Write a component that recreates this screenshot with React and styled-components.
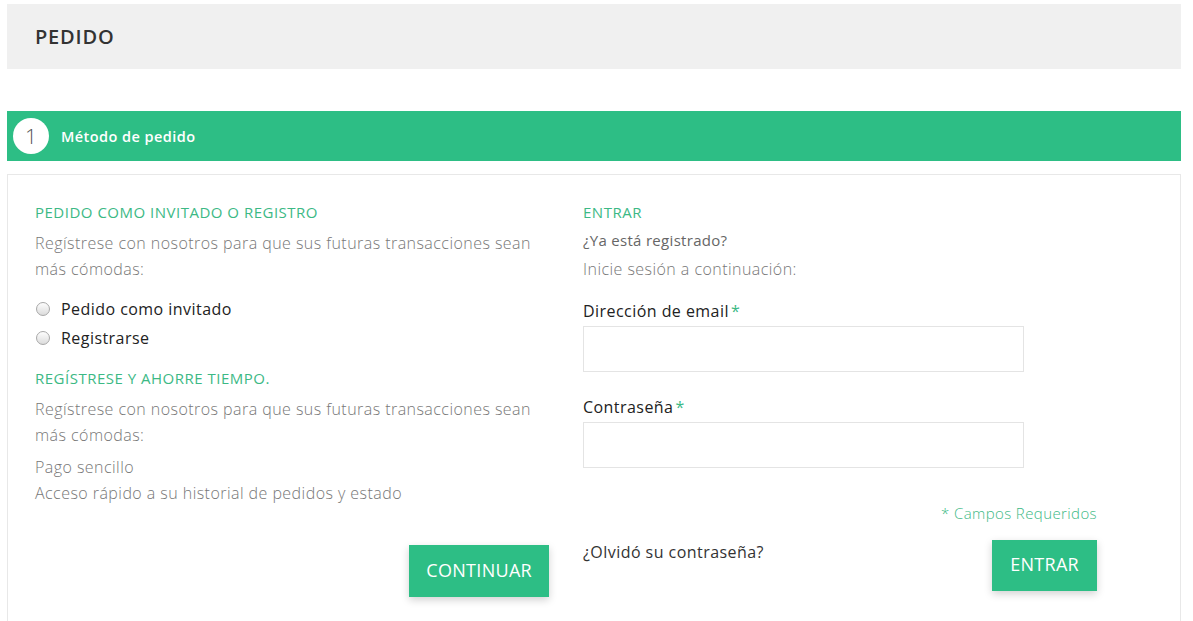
import React from "react";
import styled, { createGlobalStyle } from "styled-components";

const GREEN = "#2dbe85";
const HEAD_GREEN = "#3cb985";

const Global = createGlobalStyle`
  html, body { margin: 0; padding: 0; background: #fff; }
  body { font-family: "Open Sans", "DejaVu Sans", sans-serif; }
  * { box-sizing: border-box; }
`;

const Page = styled.div`
  padding: 4px 12px 0 7px;
  display: flex;
  flex-direction: column;
`;

const TitleBar = styled.div`
  height: 65px;
  background: #f0f0f0;
  display: flex;
  align-items: center;
  padding-left: 28px;
`;

const Title = styled.h1`
  margin: 0;
  font-size: 20px;
  font-weight: 600;
  color: #333;
  letter-spacing: 0.8px;
`;

const StepBar = styled.div`
  margin-top: 42px;
  height: 50px;
  background: ${GREEN};
  display: flex;
  align-items: center;
  padding-left: 6px;
  gap: 12px;
`;

const StepNum = styled.span`
  width: 36px;
  height: 36px;
  border-radius: 50%;
  background: #fff;
  color: #555;
  font-size: 21px;
  font-weight: 300;
  display: flex;
  align-items: center;
  justify-content: center;
`;

const StepLabel = styled.span`
  color: #fff;
  font-size: 14.5px;
  font-weight: 600;
  letter-spacing: 0.45px;
`;

const Box = styled.div`
  margin-top: 13px;
  border: 1px solid #e8e8e8;
  border-bottom: none;
  height: 450px;
  padding: 25px 0 0 27px;
  display: grid;
  grid-template-columns: 514px 514px;
  column-gap: 34px;
`;

const Col = styled.div`
  display: flex;
  flex-direction: column;
`;

const SectionHead = styled.h3`
  margin: ${(p) => p.$mt || 0}px 0 0;
  font-size: 15px;
  font-weight: 400;
  color: ${HEAD_GREEN};
  line-height: 24px;
  letter-spacing: 0.5px;
`;

const Para = styled.p`
  margin: ${(p) => p.$mt || 0}px 0 0;
  font-size: ${(p) => p.$size || 16}px;
  font-weight: ${(p) => p.$weight || 300};
  color: ${(p) => p.$color || "#777"};
  line-height: ${(p) => p.$lh || 26}px;
  letter-spacing: ${(p) => p.$ls ?? 0.45}px;
`;

const RadioGroup = styled.div`
  margin-top: 12px;
  display: flex;
  flex-direction: column;
`;

const RadioRow = styled.label`
  display: flex;
  align-items: center;
  gap: 11px;
  height: 29px;
  font-size: 16px;
  color: #222;
  padding-left: 1px;
  letter-spacing: 0.45px;
`;

const RadioDot = styled.span`
  width: 14px;
  height: 14px;
  border-radius: 50%;
  border: 1px solid #a8a8a8;
  background: linear-gradient(#fdfdfd, #dcdcdc);
`;

const ButtonRow = styled.div`
  display: flex;
  justify-content: ${(p) => p.$justify || "flex-end"};
  align-items: flex-start;
  margin-top: ${(p) => p.$mt || 0}px;
`;

const Button = styled.button`
  border: none;
  background: ${GREEN};
  color: #fff;
  font-family: inherit;
  font-size: 18px;
  font-weight: 400;
  letter-spacing: 0.3px;
  height: ${(p) => p.$h || 52}px;
  padding: 0 ${(p) => p.$px || 18}px 3px;
  box-shadow: 0 3px 8px rgba(0, 0, 0, 0.18);
  cursor: pointer;
`;

const FieldLabel = styled.label`
  display: block;
  font-size: 16px;
  color: #222;
  line-height: 24px;
  letter-spacing: 0.45px;
  margin-top: ${(p) => p.$mt || 0}px;
`;

const Star = styled.span`
  color: ${HEAD_GREEN};
  margin-left: 2px;
`;

const Input = styled.input`
  display: block;
  width: 441px;
  height: 46px;
  margin-top: 3px;
  border: 1px solid #e4e4e4;
  background: #fff;
  outline: none;
`;

const Required = styled.div`
  text-align: right;
  font-size: 15px;
  font-weight: 300;
  letter-spacing: 0.4px;
  color: ${HEAD_GREEN};
  margin-top: 35px;
  line-height: 20px;
`;

const Forgot = styled.span`
  font-size: 16px;
  color: #333;
  letter-spacing: 0.45px;
  margin-top: 1px;
`;

export default function App() {
  return (
    <>
      <Global />
      <Page>
        <TitleBar>
          <Title>PEDIDO</Title>
        </TitleBar>
        <StepBar>
          <StepNum>1</StepNum>
          <StepLabel>Método de pedido</StepLabel>
        </StepBar>
        <Box>
          <Col>
            <SectionHead>PEDIDO COMO INVITADO O REGISTRO</SectionHead>
            <Para $mt={6}>
              Regístrese con nosotros para que sus futuras transacciones sean más cómodas:
            </Para>
            <RadioGroup>
              <RadioRow>
                <RadioDot />
                Pedido como invitado
              </RadioRow>
              <RadioRow>
                <RadioDot />
                Registrarse
              </RadioRow>
            </RadioGroup>
            <SectionHead $mt={14}>REGÍSTRESE Y AHORRE TIEMPO.</SectionHead>
            <Para $mt={6}>
              Regístrese con nosotros para que sus futuras transacciones sean más cómodas:
            </Para>
            <Para $mt={6}>
              Pago sencillo
              <br />
              Acceso rápido a su historial de pedidos y estado
            </Para>
            <ButtonRow $mt={39}>
              <Button $px={17}>CONTINUAR</Button>
            </ButtonRow>
          </Col>
          <Col>
            <SectionHead>ENTRAR</SectionHead>
            <Para $mt={4} $size={15} $weight={400} $color="#666" $lh={24} $ls={0.3}>
              ¿Ya está registrado?
            </Para>
            <Para $mt={4}>Inicie sesión a continuación:</Para>
            <FieldLabel $mt={17}>
              Dirección de email<Star>*</Star>
            </FieldLabel>
            <Input type="email" />
            <FieldLabel $mt={23}>
              Contraseña<Star>*</Star>
            </FieldLabel>
            <Input type="password" />
            <Required>* Campos Requeridos</Required>
            <ButtonRow $justify="space-between" $mt={17}>
              <Forgot>¿Olvidó su contraseña?</Forgot>
              <Button $h={51} $px={18}>ENTRAR</Button>
            </ButtonRow>
          </Col>
        </Box>
      </Page>
    </>
  );
}
